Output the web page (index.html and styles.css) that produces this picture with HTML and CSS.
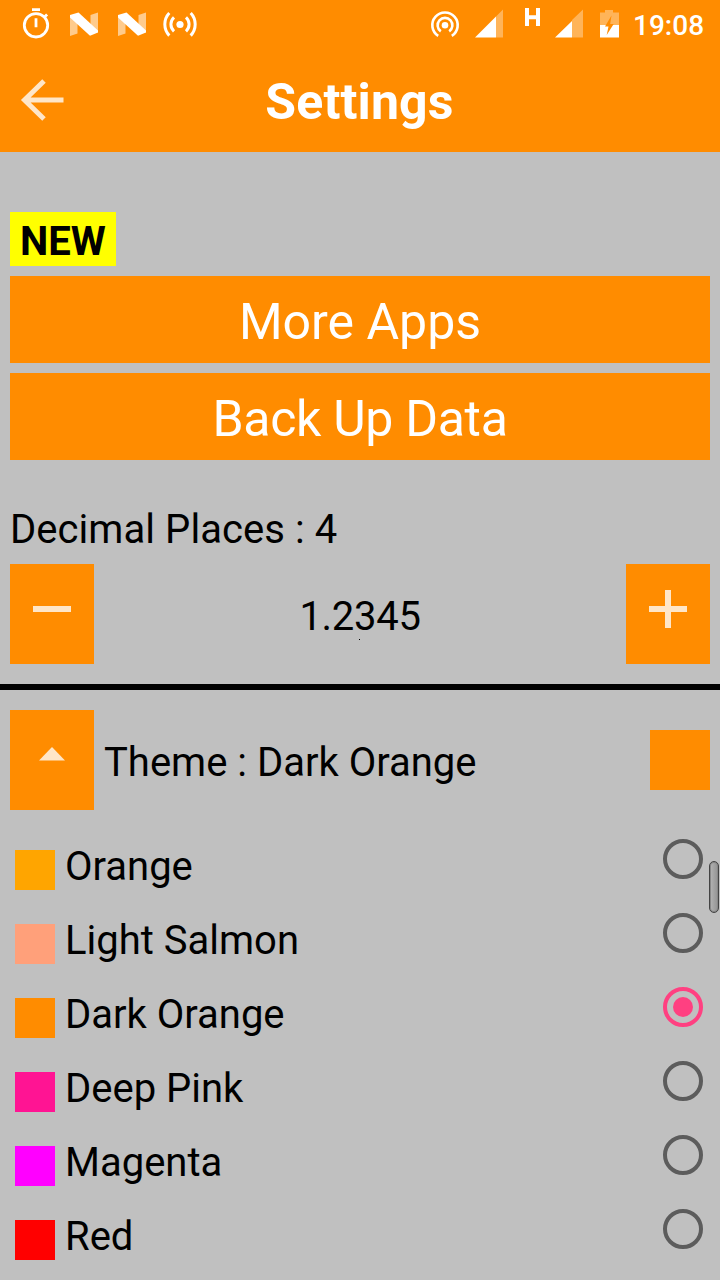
FILE: index.html
```html
<!DOCTYPE html>
<html lang="en">
<head>
<meta charset="utf-8">
<title>Settings</title>
<link rel="stylesheet" href="styles.css">
</head>
<body>
<div class="screen">
  <div class="status-bar">
    <svg class="status-icons" width="200" height="50" viewBox="0 0 200 50" fill="none" stroke="#fff" aria-hidden="true">
      <g stroke-width="2.8">
        <circle cx="36" cy="25.3" r="11.7"/>
        <path d="M32 9.700h8M36 18.3v9M44.5 17l2.6-2.6"/>
      </g>
      <g id="nougat" fill="#fff" stroke="none">
        <path d="M70 15.5V36l7.500-2.5V18zM98 12.500v20L90.500 28V15z" opacity=".55"/>
        <path d="M70 15l8.500-2.500L98 30.500v2L90 35.800 70 17.500z"/>
      </g>
      <use href="#nougat" x="48"/>
      <circle cx="180" cy="24.500" r="3.600" fill="#fff" stroke="none"/>
      <path stroke-width="3" d="M174 17.300a9.500 9.500 0 0 0 0 14M186 17.300a9.500 9.500 0 0 1 0 14M169.300 13a16.500 16.500 0 0 0 0 22.600M190.700 13a16.500 16.500 0 0 1 0 22.600"/>
    </svg>
    <div class="status-right">
      <svg width="200" height="50" viewBox="425 0 200 50" aria-hidden="true">
        <circle cx="445" cy="25.300" r="3.300" fill="#fff"/>
        <path fill="none" stroke="#fff" stroke-width="2.600" d="M440.800 31.400a7.400 7.400 0 1 1 8.400 0M438.200 35.900a12.700 12.700 0 1 1 13.600 0"/>
        <path fill="#fff" opacity=".35" d="M503 9.500V37.500H496V16.500zM583 9.500V37.500H572V20z"/>
        <path fill="#fff" d="M496 16.500v21H475zM572 21v16.500H555z"/>
        <path fill="none" stroke="#fff" stroke-width="4" d="M527 8v18M538 8v18M527 17.200h11"/>
        <path fill="#fff" opacity=".35" d="M600 12.500h5V10h8v2.500h6V25H600z"/>
        <path fill="#fff" d="M600 25h19v12.500H600z"/>
        <path fill="#ff8c00" d="M611.500 15.500L605 26.500h3.500l-1.800 8.500 7-11h-3.500z"/>
      </svg>
      <span class="clock">19:08</span>
    </div>
  </div>

  <header class="app-bar">
    <svg class="back" width="44" height="44" viewBox="0 0 44 44" fill="none" stroke="#ffe6c8" stroke-width="5" aria-label="Back"><path d="M43.500 22H4M24 3L4.500 22 24 41"/></svg>
    <h1 class="title">Settings</h1>
  </header>

  <main class="content">
    <span class="badge">NEW</span>
    <button class="action">More Apps</button>
    <button class="action backup">Back Up Data</button>

    <div class="label">Decimal Places : 4</div>
    <div class="stepper">
      <button class="square"><svg width="38" height="38" viewBox="0 0 38 38" fill="#ffe6c8"><path d="M0 16h38v6H0z"/></svg></button>
      <div class="preview"><span class="number">1.2345</span><span class="speck"></span></div>
      <button class="square"><svg width="38" height="38" viewBox="0 0 38 38" fill="#ffe6c8"><path d="M0 16h16V0h6v16h16v6H22v16h-6V22H0z"/></svg></button>
    </div>
  </main>

  <hr class="divider">

  <section class="theme">
    <div class="theme-head">
      <button class="square"><svg width="38" height="38" viewBox="0 0 38 38" fill="#ffe6c8"><path d="M6 24.500L19 11l13 13.500z"/></svg></button>
      <span class="theme-name">Theme : Dark Orange</span>
      <span class="theme-swatch"></span>
    </div>
    <div class="options">
      <label class="option"><span class="swatch orange"></span><span class="name">Orange</span><span class="radio"></span></label>
      <label class="option"><span class="swatch salmon"></span><span class="name">Light Salmon</span><span class="radio"></span></label>
      <label class="option"><span class="swatch dark-orange"></span><span class="name">Dark Orange</span><span class="radio checked"></span></label>
      <label class="option"><span class="swatch pink"></span><span class="name">Deep Pink</span><span class="radio"></span></label>
      <label class="option"><span class="swatch magenta"></span><span class="name">Magenta</span><span class="radio"></span></label>
      <label class="option"><span class="swatch red"></span><span class="name">Red</span><span class="radio"></span></label>
    </div>
  </section>
  <div class="scrollbar"></div>
</div>
</body>
</html>
```
FILE: styles.css
```css
* { box-sizing: border-box; }
body {
  margin: 0;
  background: #c0c0c0;
  color: #000;
  font: 40px/47px Roboto, sans-serif;
}
button {
  border: 0;
  padding: 0;
  margin: 0;
  background: #ff8c00;
  color: #fff;
  font-family: inherit;
}
svg { display: block; flex: none; }
.screen {
  position: relative;
  width: 720px;
  height: 1280px;
  overflow: hidden;
}
.status-bar {
  display: flex;
  justify-content: space-between;
  height: 50px;
  background: #ff8c00;
}
.status-right {
  display: flex;
  width: 295px;
}
.clock {
  margin-left: 8px;
  padding-top: 1px;
  color: #fff;
  font-size: 28px;
  font-weight: 500;
  line-height: 50px;
}
.app-bar {
  display: grid;
  grid-template-columns: 64px 1fr 64px;
  align-items: start;
  height: 102px;
  padding: 0 1px 0 0;
  background: #ff8c00;
}
.back { margin: 28px 0 0 20px; }
.title {
  margin: 23px 0 0;
  color: #fff;
  font-size: 50px;
  font-weight: 700;
  line-height: 59px;
  letter-spacing: 0.15px;
  text-align: center;
}
.content {
  display: flex;
  flex-direction: column;
  height: 532px;
  padding: 60px 10px 0;
}
.badge {
  align-self: flex-start;
  height: 54px;
  padding: 6px 10px 0;
  background: #ff0;
  font-weight: 700;
}
.action {
  height: 87px;
  margin-top: 10px;
  padding-top: 5px;
  font-size: 50px;
  line-height: 59px;
}
.backup { letter-spacing: -0.3px; }
.label {
  margin: 46px 0 11px;
  letter-spacing: 0.06px;
}
.stepper { display: flex; }
.square {
  flex: none;
  display: flex;
  justify-content: center;
  width: 84px;
  height: 100px;
  padding-top: 26px;
}
.preview {
  flex: 1;
  padding-top: 29px;
  text-align: center;
}
.number { letter-spacing: -0.3px; }
.speck {
  display: block;
  width: 1px;
  height: 1px;
  margin: -1px 0 0 265px;
  background: #000;
}
.divider {
  height: 6px;
  margin: 0;
  border: 0;
  background: #000;
}
.theme { padding: 20px 10px 0; }
.theme-head {
  display: flex;
  align-items: center;
}
.theme-name {
  flex: 1;
  padding: 5px 0 0 10px;
}
.theme-swatch {
  width: 60px;
  height: 60px;
  background: #ff8c00;
}
.options { padding: 20px 7px 0 5px; }
.option {
  display: flex;
  align-items: flex-start;
  height: 74px;
}
.swatch {
  width: 40px;
  height: 40px;
  margin-top: 20px;
}
.orange { background: #ffa500; }
.salmon { background: #ffa07a; }
.dark-orange { background: #ff8c00; }
.pink { background: #ff1493; }
.magenta { background: #f0f; }
.red { background: #f00; }
.name {
  flex: 1;
  padding: 13px 0 0 10px;
}
.radio {
  display: flex;
  width: 40px;
  height: 40px;
  margin-top: 9px;
  border: 4px solid #5c5c5c;
  border-radius: 50%;
}
.radio.checked { border-color: #ff4081; }
.checked::after {
  content: "";
  width: 20px;
  height: 20px;
  margin: auto;
  border-radius: 50%;
  background: #ff4081;
}
.scrollbar {
  position: absolute;
  top: 861px;
  right: 1px;
  width: 10px;
  height: 52px;
  border: 1.5px solid #444;
  border-radius: 5px;
  background: linear-gradient(90deg, #b4b4b4, #929292);
  box-shadow: inset 0 0 0 1px #888;
}
```
